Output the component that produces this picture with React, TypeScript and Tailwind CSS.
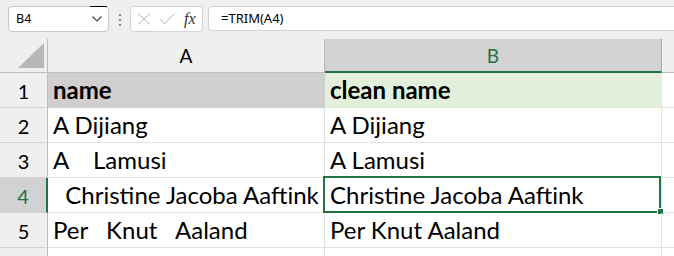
const GREEN = "#217346";

function Chevron() {
  return (
    <svg width="12" height="8" viewBox="0 0 12 8" fill="none">
      <path d="M1.5 1.5 L6 6 L10.5 1.5" stroke="#444" strokeWidth="1.2" />
    </svg>
  );
}

function CancelIcon() {
  return (
    <svg width="14" height="12" viewBox="0 0 14 12" fill="none">
      <path d="M1 0.5 L13 11.5 M13 0.5 L1 11.5" stroke="#b3b3b3" strokeWidth="1" />
    </svg>
  );
}

function EnterIcon() {
  return (
    <svg width="16" height="12" viewBox="0 0 16 12" fill="none">
      <path d="M0.8 6 L5.5 10.8 L15.2 0.8" stroke="#b3b3b3" strokeWidth="1" />
    </svg>
  );
}

function FormulaBar() {
  return (
    <div className="flex h-[39px] items-start bg-[#efefef] pt-[6px]">
      <div className="relative ml-[8px] flex h-[26px] w-[101px] items-center justify-between rounded-[4px] border border-[#c6c6c6] bg-white pl-[7px] pr-[5px]">
        <span className="font-['Noto_Sans',sans-serif] text-[12.5px] text-black">B4</span>
        <Chevron />
        <span className="absolute right-[1px] top-[-1px] h-[1px] w-[17px] bg-black" />
      </div>
      <div className="ml-[10px] mt-[8px] flex flex-col gap-[3px]">
        <span className="h-[2px] w-[2px] bg-[#8a8a8a]" />
        <span className="h-[2px] w-[2px] bg-[#8a8a8a]" />
        <span className="h-[2px] w-[2px] bg-[#8a8a8a]" />
      </div>
      <div className="ml-[9px] flex h-[26px] w-[73px] items-center rounded-[4px] border border-[#d2d2d2] bg-white pl-[6px]">
        <CancelIcon />
        <span className="ml-[8px]">
          <EnterIcon />
        </span>
        <span className="ml-[9px] font-['Liberation_Serif',serif] text-[16px] italic leading-none text-[#333]">
          fx
        </span>
      </div>
      <div className="ml-[5px] flex h-[25px] flex-1 items-center rounded-l-[4px] border border-r-0 border-[#d2d2d2] bg-white pl-[12px]">
        <span className="font-['Noto_Sans',sans-serif] text-[13px] text-black">=TRIM(A4)</span>
      </div>
    </div>
  );
}

function Corner() {
  return (
    <div className="relative h-[34px] border-b border-r border-[#bdbdbd] bg-[#efefef]">
      <svg className="absolute left-[17px] top-[4px]" width="28" height="26" viewBox="0 0 28 26">
        <polygon points="27,0 27,25 1,25" fill="#b8b8b8" />
      </svg>
    </div>
  );
}

const rows = [
  { a: "name", b: "clean name", bold: true },
  { a: "A Dijiang", b: "A Dijiang" },
  { a: "A    Lamusi", b: "A Lamusi" },
  { a: "  Christine Jacoba Aaftink", b: "Christine Jacoba Aaftink", active: true },
  { a: "Per   Knut   Aaland", b: "Per Knut Aaland" },
];

const cellText = "font-['Lato',sans-serif] text-[24px] leading-none text-black whitespace-pre";

export default function App() {
  return (
    <div className="h-[256px] w-[674px] overflow-hidden bg-white">
      <FormulaBar />
      <div className="grid grid-cols-[48px_277px_337px_1fr]">
        <Corner />
        <div className="flex h-[34px] items-end justify-center border-b border-r border-[#bdbdbd] bg-[#efefef] pb-[7px] font-['Lato',sans-serif] text-[19px] leading-none text-black">
          A
        </div>
        <div
          className="flex h-[34px] items-end justify-center border-b-2 border-r border-b-[#217346] border-r-[#a8a8a8] bg-[#d2d2d2] pb-[6px] font-['Lato',sans-serif] text-[19px] leading-none"
          style={{ color: GREEN }}
        >
          B
        </div>
        <div className="h-[34px] border-b border-[#bdbdbd] bg-[#efefef]" />

        {rows.map((r, i) => {
          const first = i === 0;
          return (
            <div key={i} className="contents">
              {r.active ? (
                <div className="flex h-[35px] items-end justify-center border-b border-r-2 border-b-[#d4d4d4] border-r-[#217346] bg-[#d2d2d2] pb-[6px] font-['Lato',sans-serif] text-[20px] leading-none text-[#217346]">
                  {i + 1}
                </div>
              ) : (
                <div className="flex h-[35px] items-end justify-center border-b border-r border-b-[#d4d4d4] border-r-[#bdbdbd] bg-[#efefef] pb-[6px] font-['Lato',sans-serif] text-[20px] leading-none text-black">
                  {i + 1}
                </div>
              )}
              <div
                className={
                  first
                    ? "flex h-[35px] items-end border-b border-r border-[#d0cece] bg-[#d0cece] pb-[5px] pl-[5px]"
                    : "flex h-[35px] items-end border-b border-r border-[#e1e1e1] pb-[5px] pl-[5px]"
                }
              >
                <span className={r.bold ? cellText + " font-bold" : cellText}>{r.a}</span>
              </div>
              <div
                className={
                  first
                    ? "flex h-[35px] items-end border-b border-r border-[#e2efda] bg-[#e2efda] pb-[5px] pl-[5px]"
                    : "relative flex h-[35px] items-end border-b border-r border-[#e1e1e1] pb-[5px] pl-[5px]"
                }
              >
                <span className={r.bold ? cellText + " font-bold" : cellText}>{r.b}</span>
                {r.active && (
                  <>
                    <div className="pointer-events-none absolute bottom-[-1px] left-[-2px] right-0 top-[-2px] border-2 border-[#217346]" />
                    <div className="absolute bottom-[-3px] right-[-3px] h-[7px] w-[7px] border border-white bg-[#217346]" />
                  </>
                )}
              </div>
              <div className="h-[35px] border-b border-[#e1e1e1]" />
            </div>
          );
        })}

        <div className="h-[10px] border-r border-[#bdbdbd] bg-[#efefef]" />
        <div className="h-[10px] border-r border-[#e1e1e1]" />
        <div className="h-[10px] border-r border-[#e1e1e1]" />
        <div className="h-[10px]" />
      </div>
    </div>
  );
}
